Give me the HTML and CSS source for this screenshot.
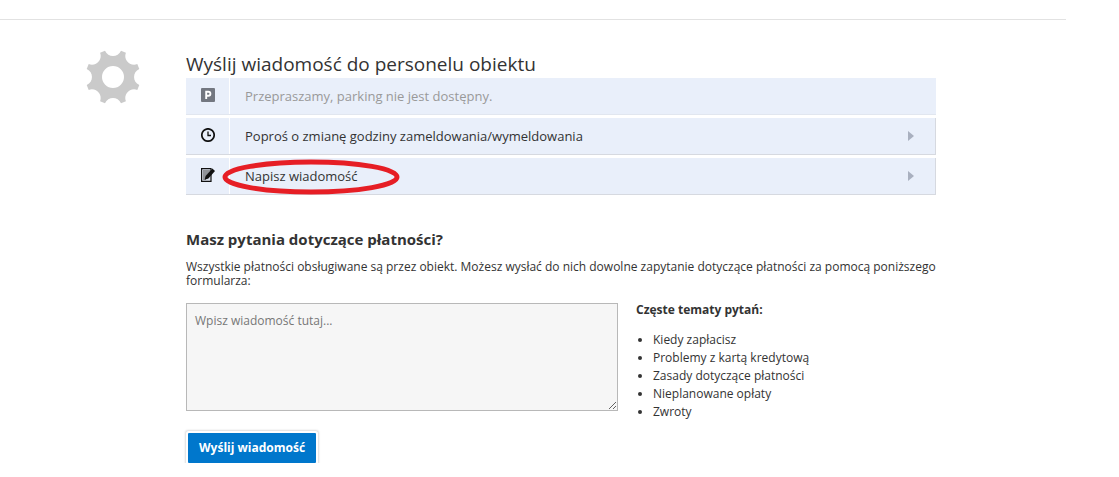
FILE: index.html
```html
<!DOCTYPE html>
<html lang="pl">
<head>
<meta charset="utf-8">
<meta name="viewport" content="width=device-width, initial-scale=1">
<title>Wyślij wiadomość do personelu obiektu</title>
<link rel="stylesheet" href="styles.css">
</head>
<body>
<hr class="divider">
<main class="page">
  <svg class="gear" viewBox="-28 -28 56 56" aria-hidden="true">
    <path fill="#cacaca" fill-rule="evenodd" d="M8-26.3 12.9-24.3C10.1-17.2 17.2-10.1 24.3-12.9L26.3-8C19.3-5 19.3 5 26.3 8L24.3 12.9C17.2 10.1 10.1 17.2 12.9 24.3L8 26.3C5 19.3-5 19.3-8 26.3L-12.9 24.3C-10.1 17.2-17.2 10.1-24.3 12.9L-26.3 8C-19.3 5-19.3-5-26.3-8L-24.3-12.9C-17.2-10.1-10.1-17.2-12.9-24.3L-8-26.3C-5-19.3 5-19.3 8-26.3ZM11 0A11 11 0 1 0-11 0 11 11 0 1 0 11 0Z"/>
  </svg>
  <div class="content">
    <h1 class="title">Wyślij wiadomość do personelu obiektu</h1>
    <ul class="options">
      <li class="option option-disabled">
        <span class="option-icon"><svg viewBox="0 0 14 14"><rect width="14" height="14" rx="1" fill="#737780"/><path d="M5.2 11V3.8H7.4A2 2 0 0 1 7.4 7.8H5.2" fill="none" stroke="#fff" stroke-width="1.9"/></svg></span>
        <span class="option-label">Przepraszamy, parking nie jest dostępny.</span>
      </li>
      <li><a class="option option-link" href="#godziny">
        <span class="option-icon"><svg viewBox="0 0 14 14"><circle cx="7" cy="7" r="6.2" fill="none" stroke="#111" stroke-width="1.7"/><path d="M7 3.4V7.5H10" fill="none" stroke="#111" stroke-width="1.3"/></svg></span>
        <span class="option-label">Poproś o zmianę godziny zameldowania/wymeldowania</span>
        <svg class="arrow" viewBox="0 0 6 10"><path d="M0 0 6 5 0 10Z"/></svg>
      </a></li>
      <li><a class="option option-link" href="#wiadomosc">
        <span class="option-icon"><svg viewBox="0 0 14 14"><path d="M.6.6H10V13.4H.6Z" fill="#dce2ec" stroke="#111" stroke-width="1.2"/><path d="M2 3H9M2 5H8M2 7H6M2 9H5M2 11H5" stroke="#444" stroke-width="1"/><path d="M3.6 11.8 4.6 8 11.4.5 14 3 7.4 10.6Z" fill="#111"/></svg></span>
        <span class="option-label"><span class="marked">Napisz wiadomość<svg class="ring" viewBox="0 0 178 36" aria-hidden="true"><ellipse cx="89" cy="18" rx="86" ry="15" fill="none" stroke="#e61e25" stroke-width="5"/></svg></span></span>
        <svg class="arrow" viewBox="0 0 6 10"><path d="M0 0 6 5 0 10Z"/></svg>
      </a></li>
    </ul>
    <h2 class="subtitle">Masz pytania dotyczące płatności?</h2>
    <p class="intro">Wszystkie płatności obsługiwane są przez obiekt. Możesz wysłać do nich dowolne zapytanie dotyczące płatności za pomocą poniższego formularza:</p>
    <form class="form">
      <div class="compose">
        <textarea class="message" aria-label="Wiadomość" placeholder="Wpisz wiadomość tutaj..."></textarea>
        <button class="send" type="button">Wyślij wiadomość</button>
      </div>
      <aside class="topics">
        <h3 class="topics-title">Częste tematy pytań:</h3>
        <ul class="topics-list">
          <li>Kiedy zapłacisz</li>
          <li>Problemy z kartą kredytową</li>
          <li>Zasady dotyczące płatności</li>
          <li>Nieplanowane opłaty</li>
          <li>Zwroty</li>
        </ul>
      </aside>
    </form>
  </div>
</main>
</body>
</html>
```
FILE: styles.css
```css
* { box-sizing: border-box; }
body {
  margin: 0;
  background: #fff;
  color: #333;
  font: 12px/14px "Open Sans", "Noto Sans", sans-serif;
}
h1, h2, h3, p, ul { margin: 0; }
.divider {
  margin: 19px 53px 0 0;
  border: 0;
  border-top: 1px solid #e2e2e2;
}
.page {
  display: flex;
  align-items: flex-start;
  gap: 45px;
  padding: 29px 183px 0 85px;
}
.gear { flex: none; width: 56px; height: 56px; }
.content { flex: 1; max-width: 750px; }
.title {
  padding-top: 2px;
  font-size: 19px;
  line-height: 27px;
  font-weight: 400;
}
.options {
  display: grid;
  gap: 3px;
  padding: 0;
  list-style: none;
}
.option {
  display: flex;
  height: 37px;
  align-items: center;
  background: #e9effa;
  border-bottom: 1px solid #e1e6ef;
  color: #333;
  font-size: 13px;
  line-height: 20px;
  text-decoration: none;
}
.option-disabled { color: #999; }
.option-link {
  padding-right: 21px;
  border-right: 1px solid #d6d9e0;
  border-bottom-color: #d6d9e0;
}
.option-icon {
  display: flex;
  align-self: stretch;
  align-items: center;
  width: 44px;
  padding: 0 14px 2px 15px;
  border-right: 1px solid #fff;
}
.option-icon svg { width: 14px; height: 14px; }
.option-label { flex: 1; padding-left: 15px; }
.arrow { width: 6px; height: 10px; fill: #a9b0bf; }
.marked { position: relative; }
.ring {
  position: absolute;
  left: -23px;
  top: -8px;
  width: 178px;
  height: 36px;
  pointer-events: none;
}
.subtitle {
  margin-top: 33px;
  font-size: 15px;
  line-height: 22px;
  font-weight: 700;
}
.intro { margin-top: 10px; }
.form {
  display: flex;
  gap: 18px;
  margin-top: 15px;
}
.compose { flex: 0 0 58%; max-width: 432px; }
.message {
  display: block;
  width: 100%;
  height: 108px;
  padding: 10px 8px;
  border: 1px solid #b8b8b8;
  border-radius: 0;
  background: #f6f6f6;
  color: #333;
  font: inherit;
  resize: both;
}
.message::placeholder { color: #777; }
.send {
  margin: 22px 0 0 2px;
  padding: 5px 11px;
  border: 0;
  border-radius: 1px;
  background: #0077cc;
  box-shadow: 0 0 0 2px #fff, 0 0 2px 3px #ddd;
  color: #fff;
  font: 700 12px/20px "Open Sans", "Noto Sans", sans-serif;
}
.topics-title { font-size: 12px; line-height: 14px; font-weight: 700; }
.topics-list { margin-top: 14px; padding-left: 17px; line-height: 18px; }
```
